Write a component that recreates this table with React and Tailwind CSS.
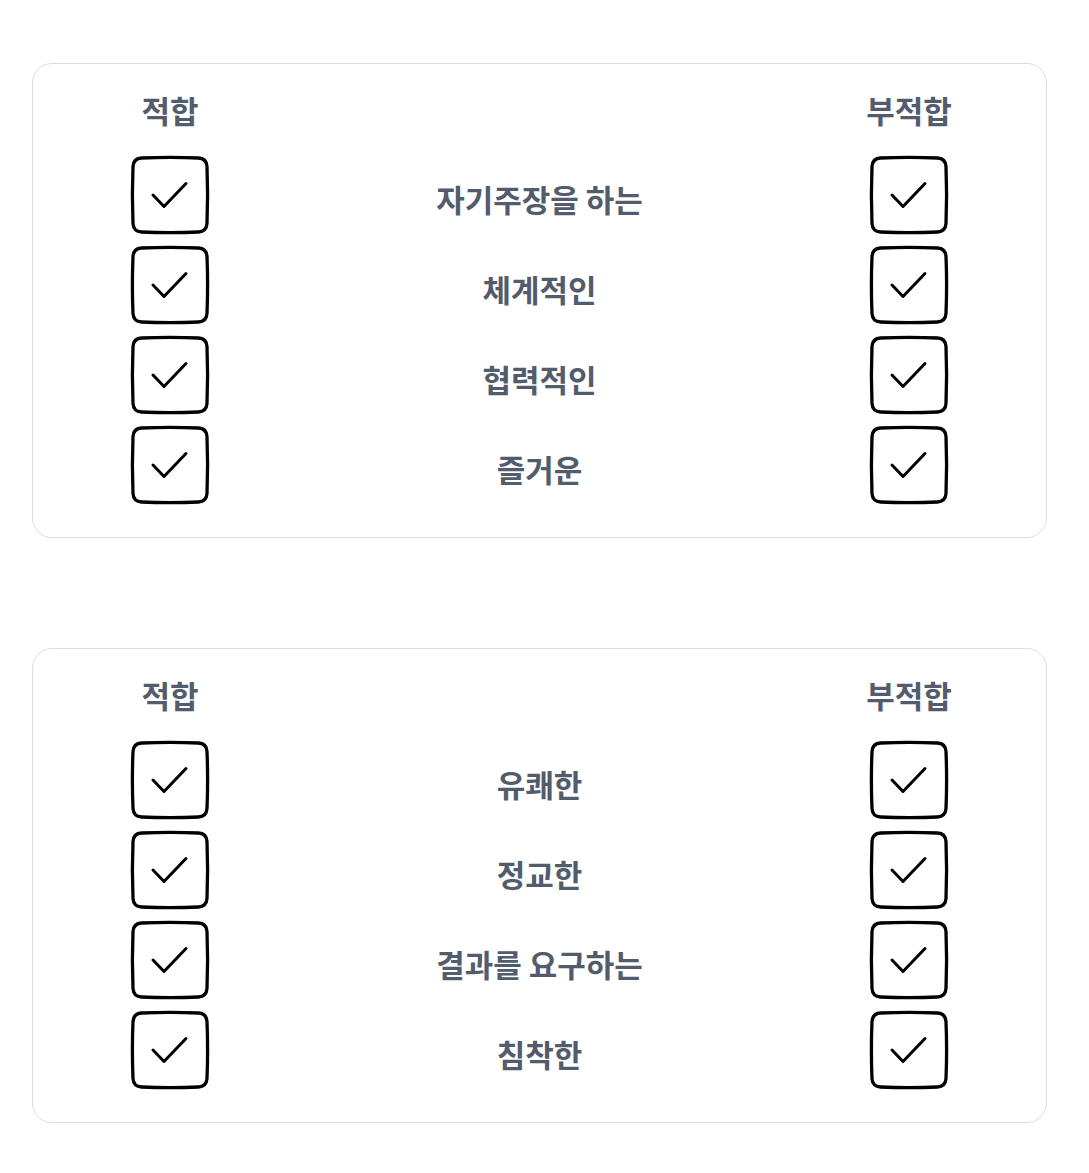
import React from 'react';

const groups = [
  ['자기주장을 하는', '체계적인', '협력적인', '즐거운'],
  ['유쾌한', '정교한', '결과를 요구하는', '침착한'],
];

const CheckBox = () => (
  <svg width="80" height="80" viewBox="0 0 80 80" className="shrink-0" fill="none">
    <path
      d="M11.5 3 Q40 1.8 68.5 3 Q76.5 3.5 77 11.5 Q78.2 40 77 68.5 Q76.5 76.5 68.5 77 Q40 78.2 11.5 77 Q3.5 76.5 3 68.5 Q1.8 40 3 11.5 Q3.5 3.5 11.5 3 Z"
      stroke="#000"
      strokeWidth="3.3"
      strokeLinejoin="round"
    />
    <path
      d="M23 40 L34 51.5 L56 28.5"
      stroke="#000"
      strokeWidth="3"
      strokeLinecap="round"
      strokeLinejoin="round"
    />
  </svg>
);

const Card = ({ items }) => (
  <div className="rounded-[20px] border border-[#dcdcdf] bg-white px-[97px] pt-7 pb-8">
    <div className="flex justify-between">
      <div className="w-[80px] h-9 flex justify-center items-center whitespace-nowrap text-[31px] font-bold text-[#535c6c]">
        적합
      </div>
      <div className="w-[80px] h-9 flex justify-center items-center whitespace-nowrap text-[31px] font-bold text-[#535c6c]">
        부적합
      </div>
    </div>
    <div className="mt-[27px] flex flex-col gap-[10px]">
      {items.map((label, i) => (
        <div key={i} className="flex items-center justify-between h-[80px]">
          <CheckBox />
          <span className="pt-2 text-[31px] font-bold text-[#535c6c] whitespace-nowrap">{label}</span>
          <CheckBox />
        </div>
      ))}
    </div>
  </div>
);

const App = () => {
  return (
    <div
      className="min-h-screen bg-white pt-[63px] pb-[50px] pl-8 pr-[42px] flex flex-col gap-[110px]"
      style={{ fontFamily: '"Noto Sans CJK KR", "Noto Sans", sans-serif' }}
    >
      {groups.map((items, i) => (
        <Card key={i} items={items} />
      ))}
    </div>
  );
};

export default App;
